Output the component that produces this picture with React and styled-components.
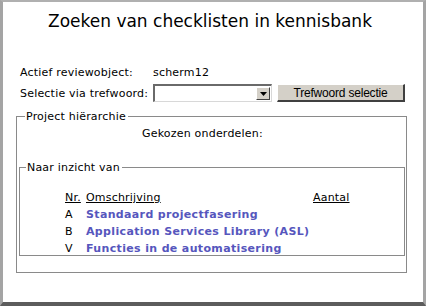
import styled, { createGlobalStyle } from 'styled-components';

const GlobalStyle = createGlobalStyle`
  html, body {
    margin: 0;
    padding: 0;
    background: #ffffff;
  }
`;

const items = [
  { nr: 'A', label: 'Standaard projectfasering' },
  { nr: 'B', label: 'Application Services Library (ASL)' },
  { nr: 'V', label: 'Functies in de automatisering' },
];

function App() {
  return (
    <>
      <GlobalStyle />
      <Window>
        <Title>Zoeken van checklisten in kennisbank</Title>
        <Form>
          <Row>
            <Label>Actief reviewobject:</Label>
            <Value>scherm12</Value>
          </Row>
          <Row>
            <Label>Selectie via trefwoord:</Label>
            <Select>
              <DropButton>
                <svg width='7' height='4' viewBox='0 0 7 4'>
                  <path d='M0 0h7L3.5 4z' fill='#000' />
                </svg>
              </DropButton>
            </Select>
            <Button>Trefwoord selectie</Button>
          </Row>
        </Form>
        <Outer>
          <Legend>Project hiërarchie</Legend>
          <Chosen>Gekozen onderdelen:</Chosen>
          <Inner>
            <Legend>Naar inzicht van</Legend>
            <Table>
              <Head>Nr.</Head>
              <Head>Omschrijving</Head>
              <Head>Aantal</Head>
              {items.map(item => (
                <ItemRow key={item.nr}>
                  <Nr>{item.nr}</Nr>
                  <Link>{item.label}</Link>
                </ItemRow>
              ))}
            </Table>
          </Inner>
        </Outer>
      </Window>
    </>
  );
}

const Window = styled.div`
  width: 426px;
  height: 306px;
  box-sizing: border-box;
  border-left: 3px solid #a4a4a4;
  border-top: 2px solid #b0b0b0;
  border-right: 3px solid #a4a4a4;
  border-bottom: 4px solid #5c5c5c;
  background: #fff;
  font-family: 'DejaVu Sans', Verdana, sans-serif;
  font-size: 11px;
  letter-spacing: 0.2px;
  color: #000;
  display: flex;
  flex-direction: column;
`;

const Title = styled.h1`
  margin: 0 6px 0 0;
  padding-top: 8px;
  height: 28px;
  text-align: center;
  font-weight: normal;
  font-size: 17px;
  line-height: 22px;
  letter-spacing: 0;
`;

const Form = styled.div`
  margin-top: 24px;
  padding-left: 17px;
  display: flex;
  flex-direction: column;
  gap: 1px;
`;

const Row = styled.div`
  display: flex;
  align-items: center;
  height: 20px;
`;

const Label = styled.span`
  width: 133px;
  white-space: nowrap;
`;

const Value = styled.span``;

const Select = styled.div`
  width: 119px;
  height: 18px;
  box-sizing: border-box;
  border-top: 2px solid #6a6a6a;
  border-left: 2px solid #6a6a6a;
  border-right: 1px solid #d8d8d8;
  border-bottom: 1px solid #d8d8d8;
  background: #fff;
  display: flex;
  justify-content: flex-end;
  padding: 1px;
`;

const DropButton = styled.div`
  width: 14px;
  box-sizing: border-box;
  background: #d4d0c8;
  border-top: 1px solid #fff;
  border-left: 1px solid #fff;
  border-right: 1px solid #404040;
  border-bottom: 1px solid #404040;
  display: flex;
  align-items: center;
  justify-content: center;
`;

const Button = styled.button`
  margin-left: 5px;
  width: 128px;
  height: 18px;
  box-sizing: border-box;
  padding: 0;
  background: #d4d0c8;
  border-top: 1px solid #fff;
  border-left: 1px solid #fff;
  border-right: 2px solid #404040;
  border-bottom: 2px solid #404040;
  font-family: 'Liberation Sans', Arial, sans-serif;
  font-size: 12px;
  line-height: 14px;
  letter-spacing: -0.2px;
  color: #000;
`;

const Outer = styled.fieldset`
  margin: 7px 0 0 13px;
  width: 391px;
  height: 163px;
  box-sizing: border-box;
  border: 1px solid #8a8a8a;
  padding: 0 1px 15px 2px;
  display: flex;
  flex-direction: column;
`;

const Legend = styled.legend`
  padding: 0 2px 0 1px;
  margin-left: 6px;
  line-height: 13px;
`;

const Chosen = styled.div`
  margin: 4px 0 5px 123px;
  height: 14px;
`;

const Inner = styled.fieldset`
  margin: 15px 0 0 0;
  flex: 1;
  box-sizing: border-box;
  border: 1px solid #8a8a8a;
  padding: 0;
`;

const Table = styled.div`
  display: grid;
  grid-template-columns: 21px 227px auto;
  padding: 17px 0 0 45px;
  row-gap: 4px;
`;

const Head = styled.span`
  text-decoration: underline;
  line-height: 13px;
`;

const ItemRow = styled.div`
  display: contents;
`;

const Nr = styled.span`
  line-height: 13px;
`;

const Link = styled.span`
  grid-column: span 2;
  line-height: 13px;
  font-weight: bold;
  letter-spacing: 0.35px;
  color: #5656bd;
  white-space: nowrap;
`;

export default App;
